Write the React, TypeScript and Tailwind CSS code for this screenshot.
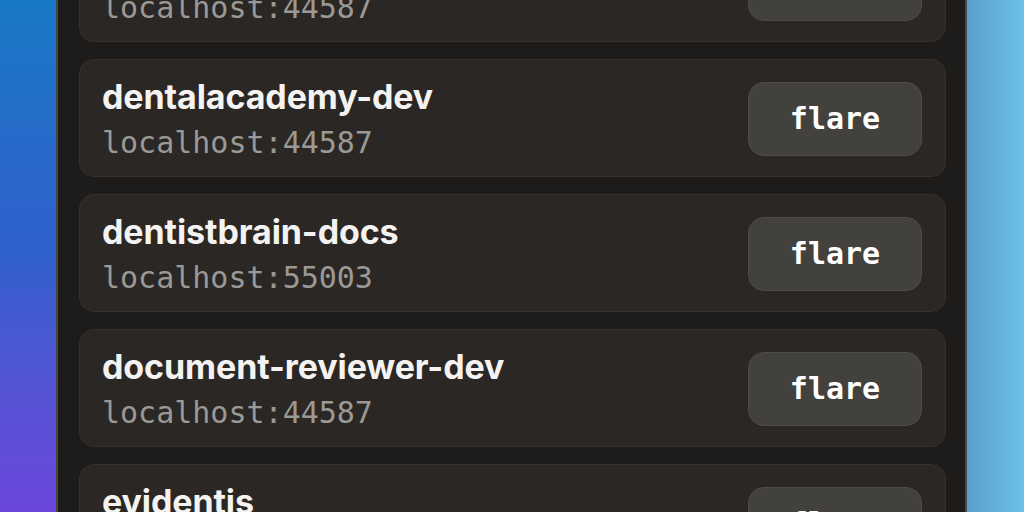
import React from 'react';

// Tunnel list entries
const tunnels = [
  { name: 'dentalacademy', port: '44587' },
  { name: 'dentalacademy-dev', port: '44587' },
  { name: 'dentistbrain-docs', port: '55003' },
  { name: 'document-reviewer-dev', port: '44587' },
  { name: 'evidentis', port: '44587' },
];

const TunnelCard = ({ name, port }: { name: string; port: string }) => (
  <div className="h-[118px] shrink-0 rounded-[15px] border border-[#34312e] bg-[#2a2724] pl-[22px] pr-[23px] pt-[2px] flex items-center justify-between">
    <div className="flex flex-col">
      <span className="text-[34px] leading-[40px] font-bold text-[#f4f3f1] font-['Inter',sans-serif] tracking-[-0.1px]">
        {name}
      </span>
      <span className="text-[30px] leading-[36px] text-[#9b9995] mt-[8px] font-['DejaVu_Sans_Mono',monospace]">
        localhost:{port}
      </span>
    </div>
    <button className="w-[174px] h-[74px] rounded-[16px] border border-[#4e4c49] bg-[#43413e] text-[30px] leading-none font-bold text-white font-['DejaVu_Sans_Mono',monospace]">
      flare
    </button>
  </div>
);

export default function App() {
  return (
    <div className="w-[1024px] h-[512px] overflow-hidden flex bg-[#1e1c1a]">
      {/* left wallpaper */}
      <div className="w-[56px] h-full bg-gradient-to-b from-[#1778c6] via-[#2f5fcc] to-[#6c46dc]" />

      {/* window */}
      <div className="flex-1 h-full border-x-2 border-[#4a4843] bg-[#1e1c1a] pl-[21px] pr-[19px] overflow-hidden">
        <div className="flex flex-col gap-[17px] mt-[-76px]">
          {tunnels.map((t) => (
            <TunnelCard key={t.name} name={t.name} port={t.port} />
          ))}
        </div>
      </div>

      {/* right wallpaper */}
      <div className="w-[57px] h-full bg-gradient-to-r from-[#5c9fcf] to-[#6cc0e6]" />
    </div>
  );
}
